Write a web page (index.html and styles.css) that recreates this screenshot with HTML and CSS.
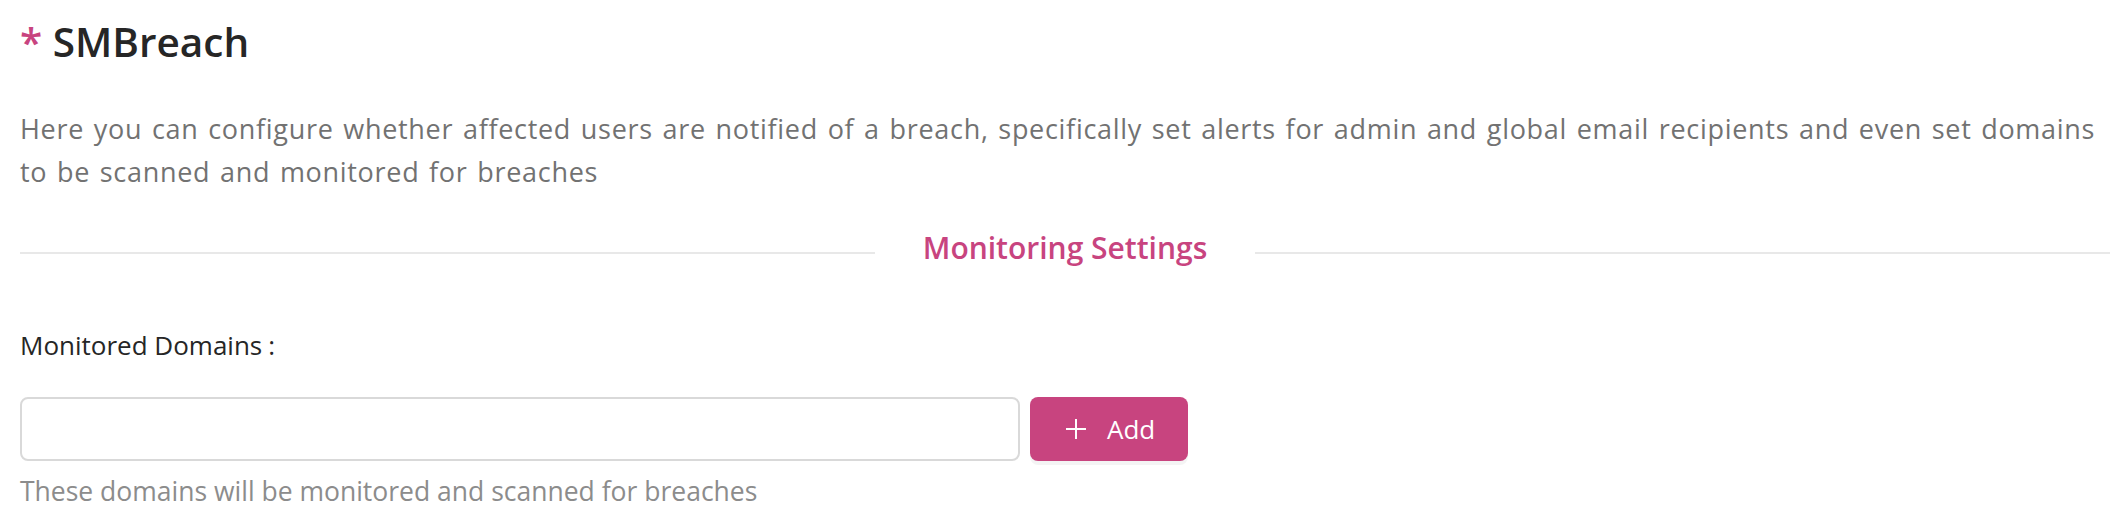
FILE: index.html
```html
<!DOCTYPE html>
<html lang="en">
<head>
<meta charset="utf-8">
<title>SMBreach</title>
<link rel="stylesheet" href="styles.css">
</head>
<body>
  <main class="page">
    <h1 class="title"><span class="req">*</span> SMBreach</h1>
    <p class="desc">Here you can configure whether affected users are notified of a breach, specifically set alerts for admin and global email recipients and even set domains to be scanned and monitored for breaches</p>

    <div class="divider">
      <span class="divider-line"></span>
      <span class="divider-text">Monitoring Settings</span>
      <span class="divider-line"></span>
    </div>

    <div class="field">
      <label class="field-label" for="domain">Monitored Domains<span class="colon">:</span></label>
      <div class="field-row">
        <input class="text-input" id="domain" type="text">
        <button class="btn-primary" type="button">
          <svg class="plus" width="22" height="22" viewBox="0 0 22 22" aria-hidden="true">
            <path d="M11 1v20M1 11h20" stroke="#fff" stroke-width="2" fill="none"/>
          </svg>
          <span>Add</span>
        </button>
      </div>
      <div class="help">These domains will be monitored and scanned for breaches</div>
    </div>
  </main>
</body>
</html>
```

FILE: styles.css
```css
html, body {
  margin: 0;
  padding: 0;
  background: #ffffff;
}

body {
  font-family: "Open Sans", "Noto Sans", sans-serif;
  color: #262626;
}

.page {
  padding: 15px 10px 0 20px;
}

.title {
  margin: 0;
  font-size: 40.5px;
  font-weight: 600;
  line-height: 54px;
  color: #262626;
}

.req {
  color: #c8447f;
}

.desc {
  margin: 38px 0 0;
  font-family: "Open Sans", sans-serif;
  font-size: 27px;
  line-height: 43px;
  letter-spacing: 0.7px;
  word-spacing: 2px;
  color: #727272;
}

.divider {
  display: flex;
  align-items: center;
  height: 42px;
  margin-top: 33px;
}

.divider-line {
  flex: 1;
  height: 0;
  border-top: 2px solid #e8e8e8;
  margin-top: 12px;
}

.divider-text {
  padding: 0 48px;
  font-size: 30px;
  font-weight: 600;
  color: #c8447f;
  white-space: nowrap;
}

.field {
  margin-top: 59px;
}

.field-label {
  display: block;
  font-size: 26px;
  line-height: 36px;
  color: #262626;
}

.colon {
  margin-left: 6px;
}

.field-row {
  display: flex;
  align-items: center;
  gap: 10px;
  margin-top: 34px;
}

.text-input {
  box-sizing: border-box;
  width: 1000px;
  height: 64px;
  border: 2px solid #d9d9d9;
  border-radius: 8px;
  padding: 0 20px;
  font-family: inherit;
  font-size: 26px;
  outline: none;
  background: #fff;
}

.btn-primary {
  display: flex;
  align-items: center;
  gap: 20px;
  height: 64px;
  padding: 0 33px 0 35px;
  border: none;
  border-radius: 8px;
  background: #c8447f;
  color: #ffffff;
  font-family: inherit;
  font-size: 26px;
  box-shadow: 0 4px 0 rgba(0, 0, 0, 0.045);
  cursor: pointer;
}

.plus {
  display: block;
}

.help {
  margin-top: 12px;
  font-size: 26.5px;
  line-height: 36px;
  color: #8c8c8c;
}
```
